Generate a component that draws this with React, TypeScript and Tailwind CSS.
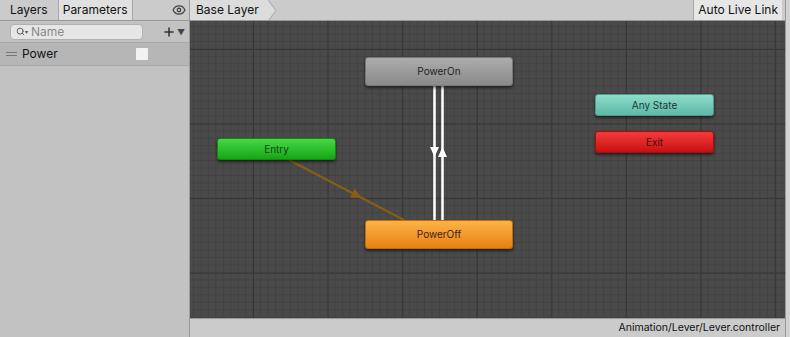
import { Eye, Search, Plus } from "lucide-react";

type NodeProps = { label: string; left: number; top: number; w: number; h: number; tone: string; text: string };

function StateNode({ label, left, top, w, h, tone, text }: NodeProps) {
  return (
    <div
      className={`absolute flex items-center justify-center rounded-[3px] text-[10px] shadow-[0_2px_3px_rgba(0,0,0,0.55)] ${tone} ${text}`}
      style={{ left, top, width: w, height: h }}
    >
      {label}
    </div>
  );
}

function Canvas() {
  // arrow on the entry transition, along the line direction
  const ax = 166, ay = 174;
  const dx = 115, dy = 60;
  const len = Math.hypot(dx, dy);
  const ux = dx / len, uy = dy / len;
  const tip = [ax + ux * 6, ay + uy * 6];
  const b1 = [ax - ux * 4 - uy * 5, ay - uy * 4 + ux * 5];
  const b2 = [ax - ux * 4 + uy * 5, ay - uy * 4 - ux * 5];

  return (
    <div className="relative flex-1 overflow-hidden bg-[#4a4a4a] [background-image:linear-gradient(to_right,#363636_1px,transparent_1px),linear-gradient(to_bottom,#363636_1px,transparent_1px),linear-gradient(to_right,#424242_1px,transparent_1px),linear-gradient(to_bottom,#424242_1px,transparent_1px)] [background-size:74.6px_74.6px,74.6px_74.6px,7.46px_7.46px,7.46px_7.46px] [background-position:63px_28px,63px_28px,3px_5px,3px_5px]">
      <svg className="absolute inset-0" width="594" height="297">
        <line x1="99" y1="139" x2="214" y2="199" stroke="#8a5e12" strokeWidth="2" />
        <polygon points={`${tip[0]},${tip[1]} ${b1[0]},${b1[1]} ${b2[0]},${b2[1]}`} fill="#8a5e12" />
        <line x1="244.5" y1="65" x2="244.5" y2="199" stroke="#fff" strokeWidth="2.5" />
        <line x1="252.5" y1="65" x2="252.5" y2="199" stroke="#fff" strokeWidth="2.5" />
        <polygon points="240,126 249,126 244.5,136" fill="#fff" />
        <polygon points="248,136 257,136 252.5,126" fill="#fff" />
      </svg>
      <StateNode label="PowerOn" left={175} top={36} w={148} h={29} tone="bg-gradient-to-b from-[#acacac] to-[#8a8a8a] border border-[#777]" text="text-[#222]" />
      <StateNode label="Entry" left={27} top={117} w={119} h={22} tone="bg-gradient-to-b from-[#45d845] to-[#13a613] border border-[#0f8a0f]" text="text-[#154515]" />
      <StateNode label="PowerOff" left={175} top={199} w={148} h={29} tone="bg-gradient-to-b from-[#fcb345] to-[#e8800c] border border-[#c46a08]" text="text-[#3a2208]" />
      <StateNode label="Any State" left={405} top={73} w={119} h={22} tone="bg-gradient-to-b from-[#8edcca] to-[#5eb8a6] border border-[#4d9c8c]" text="text-[#173a33]" />
      <StateNode label="Exit" left={405} top={110} w={119} h={22} tone="bg-gradient-to-b from-[#f43a3a] to-[#c80e0e] border border-[#a80c0c]" text="text-[#4a0a0a]" />
    </div>
  );
}

export default function App() {
  return (
    <div className="flex h-[337px] w-[790px] bg-[#c2c2c2] text-[12px] text-[#111] font-['Inter','Liberation_Sans',sans-serif]">
      <div className="flex w-[190px] flex-col border-r border-[#999]">
        <div className="flex h-[21px] items-stretch border-b border-[#999] bg-[#cbcbcb]">
          <div className="flex items-center border-r border-[#aaa] px-[10px]">Layers</div>
          <div className="flex items-center border-r border-[#aaa] bg-[#e0e0e0] px-[4px]">Parameters</div>
          <div className="flex-1" />
          <div className="flex items-center pr-[3px]">
            <Eye size={14} strokeWidth={2.2} className="text-[#444]" fill="#cbcbcb" />
          </div>
        </div>
        <div className="flex h-[21px] items-center pl-[10px] pr-[4px]">
          <div className="flex h-[16px] w-[133px] items-center gap-[3px] rounded-[4px] border border-[#b0b0b0] bg-[#e6e6e6] px-[5px] text-[#777]">
            <Search size={9} strokeWidth={2.5} className="text-[#555]" />
            <span className="text-[6px] text-[#555] -ml-[3px]">▾</span>
            <span className="text-[12px] leading-none text-[#8a8a8a]">Name</span>
          </div>
          <div className="flex-1" />
          <Plus size={14} strokeWidth={2.6} className="text-[#333]" />
          <span className="ml-[1px] text-[8px] text-[#444]">▼</span>
        </div>
        <div className="flex h-[24px] items-center border-y border-[#a8a8a8] bg-[#b6b6b6] pl-[6px]">
          <div className="flex w-[11px] flex-col gap-[2px]">
            <div className="h-px bg-[#777]" />
            <div className="h-px bg-[#777]" />
          </div>
          <span className="ml-[5px] text-[12px]">Power</span>
          <div className="flex-1" />
          <div className="mr-[41px] h-[12px] w-[12px] rounded-[1px] bg-[#f2f2f2]" />
        </div>
        <div className="flex-1" />
      </div>
      <div className="flex flex-1 flex-col">
        <div className="flex h-[21px] items-stretch border-b border-[#999] bg-[#cbcbcb]">
          <div className="relative flex items-center bg-[#dcdcdc] pl-[6px] pr-[10px]">
            Base Layer
            <svg className="absolute -right-[8px] top-0" width="9" height="21">
              <polygon points="0,0 8,10.5 0,21" fill="#dcdcdc" />
              <polyline points="0,0 8,10.5 0,21" fill="none" stroke="#a6a6a6" strokeWidth="1" />
            </svg>
          </div>
          <div className="flex-1" />
          <div className="flex items-center border-l border-[#aaa] bg-[#e6e6e6] px-[4px] mr-[3px]">Auto Live Link</div>
        </div>
        <Canvas />
        <div className="flex h-[19px] items-center justify-end border-t border-[#999] bg-[#cbcbcb] pr-[5px] text-[10.5px]">
          Animation/Lever/Lever.controller
        </div>
      </div>
      <div className="w-[5px] border-l border-[#999] bg-[#d2d2d2]" />
    </div>
  );
}
